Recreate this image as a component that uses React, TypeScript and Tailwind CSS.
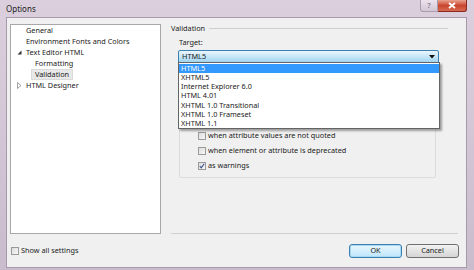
import React from 'react';

const treeItems = [
  { label: 'General', indent: 0, arrow: null },
  { label: 'Environment Fonts and Colors', indent: 0, arrow: null },
  { label: 'Text Editor HTML', indent: 0, arrow: 'open' },
  { label: 'Formatting', indent: 1, arrow: null },
  { label: 'Validation', indent: 1, arrow: null, selected: true },
  { label: 'HTML Designer', indent: 0, arrow: 'closed' },
];

const targets = [
  'HTML5',
  'XHTML5',
  'Internet Explorer 6.0',
  'HTML 4.01',
  'XHTML 1.0 Transitional',
  'XHTML 1.0 Frameset',
  'XHTML 1.1',
];

function CheckBox({ checked }: { checked?: boolean }) {
  return (
    <div className="w-[8px] h-[8px] border border-[#9a9a9a] bg-gradient-to-br from-[#dcdcdc] to-[#f8f8f8] flex items-center justify-center shrink-0">
      {checked && (
        <svg width="6" height="6" viewBox="0 0 6 6">
          <path d="M0.8 3.2 L2.3 4.8 L5.2 0.8" stroke="#3a4f8a" strokeWidth="1.1" fill="none" />
        </svg>
      )}
    </div>
  );
}

export default function App() {
  return (
    <div
      className="w-[474px] h-[270px] overflow-hidden flex flex-col bg-gradient-to-b from-[#dccfdd] to-[#c9bccd] text-[7.3px] leading-none text-[#1a1a1a]"
      style={{ fontFamily: '"Noto Sans", "Open Sans", sans-serif' }}
    >
      {/* title bar */}
      <div className="h-[17px] flex items-start justify-between shrink-0">
        <span className="ml-[6px] mt-[5px] text-[8px] text-[#222]">Options</span>
        <div className="flex mr-[7px]">
          <div className="w-[18px] h-[12px] rounded-bl-[3px] border border-[#a89cae] border-t-0 bg-gradient-to-b from-[#ece3ed] to-[#d3c6d6] flex items-center justify-center text-[7px] text-[#6a6070]">
            ?
          </div>
          <div className="w-[29px] h-[12px] rounded-br-[3px] border border-[#8a2a20] border-t-0 border-l-0 bg-gradient-to-b from-[#e8a190] via-[#c9452f] to-[#d66a4e] flex items-center justify-center">
            <svg width="8" height="7" viewBox="0 0 8 7">
              <path d="M1 1 L7 6 M7 1 L1 6" stroke="#fff" strokeWidth="1.8" />
            </svg>
          </div>
        </div>
      </div>

      {/* client area */}
      <div className="flex-1 ml-[6px] mr-[7px] mb-[2px] bg-[#f0f0f0] border border-[#a999ad] flex flex-col">
        <div className="flex h-[216px]">
          {/* tree */}
          <div className="ml-[3px] mt-[6px] w-[151px] h-[210px] bg-white border border-[#a8a8a8]">
            {treeItems.map((item) => (
              <div key={item.label} className="h-[11px] flex items-center relative" style={{ paddingLeft: item.indent ? 24 : 15 }}>
                {item.arrow === 'open' && (
                  <svg className="absolute left-[6px] top-[3px]" width="5" height="5" viewBox="0 0 5 5">
                    <path d="M4.5 0.5 L4.5 4.5 L0.5 4.5 Z" fill="#333" />
                  </svg>
                )}
                {item.arrow === 'closed' && (
                  <svg className="absolute left-[6px] top-[2px]" width="5" height="7" viewBox="0 0 5 7">
                    <path d="M0.5 0.5 L4 3.5 L0.5 6.5 Z" fill="none" stroke="#8a8a8a" strokeWidth="0.8" />
                  </svg>
                )}
                <span className={item.selected ? 'bg-[#e8e8e8] border border-[#dadada] px-[3px] h-[11px] flex items-center -ml-[4px]' : ''}>
                  {item.label}
                </span>
              </div>
            ))}
          </div>

          {/* right page */}
          <div className="ml-[10px] w-[287px] flex flex-col relative">
            <div className="flex items-center mt-[6px] h-[9px]">
              <span>Validation</span>
              <div className="ml-[4px] w-[239px] h-px bg-[#cfcfcf]" />
            </div>
            <div className="ml-[8px] mt-[6px] h-[9px]">Target:</div>
            <div className="ml-[7px] mt-[2px] w-[261px] h-[14px] border border-[#3c7fb1] rounded-[2px] bg-gradient-to-b from-[#eaf6fd] via-[#c4e5f6] to-[#98d1ef] flex items-center justify-between px-[3px]">
              <span>HTML5</span>
              <svg width="6" height="4" viewBox="0 0 6 4">
                <path d="M0 0 L6 0 L3 3.5 Z" fill="#111" />
              </svg>
            </div>

            {/* inner group with checkboxes */}
            <div className="ml-[8px] mt-[30px] w-[257px] h-[84px] border border-[#dcdcdc] rounded-[2px] flex flex-col justify-end pb-[7px] gap-[7px] pl-[18px]">
              <div className="flex items-center gap-[2px] h-[8px]">
                <CheckBox />
                <span>when attribute values are not quoted</span>
              </div>
              <div className="flex items-center gap-[2px] h-[8px]">
                <CheckBox />
                <span>when element or attribute is deprecated</span>
              </div>
              <div className="flex items-center gap-[2px] h-[8px]">
                <CheckBox checked />
                <span>as warnings</span>
              </div>
            </div>

            <div className="mt-auto h-px bg-[#d0d0d0] w-[287px]" />

            {/* dropdown list */}
            <div className="absolute left-[7px] top-[44px] w-[262px] h-[67px] bg-white border border-[#646464] shadow-[2px_2px_2px_rgba(0,0,0,0.35)] flex flex-col pt-[1px]">
              {targets.map((t, i) => (
                <div
                  key={t}
                  className={
                    i === 0
                      ? 'h-[9.5px] bg-[#3399ff] text-white flex items-center px-[2px]'
                      : 'h-[9.3px] flex items-center px-[2px]'
                  }
                >
                  {t}
                </div>
              ))}
            </div>
          </div>
        </div>

        {/* bottom bar */}
        <div className="flex-1 flex items-center justify-between pl-[4px] pr-[7px]">
          <div className="flex items-center gap-[2px] mt-[1px]">
            <CheckBox />
            <span>Show all settings</span>
          </div>
          <div className="flex gap-[4px] mt-[1px]">
            <button className="w-[53px] h-[14px] rounded-[3px] border border-[#3c7fb1] bg-gradient-to-b from-[#eaf6fd] to-[#bee6fd] text-[7.3px] leading-none shadow-[inset_0_0_0_1px_#a7d9f5]">
              OK
            </button>
            <button className="w-[53px] h-[14px] rounded-[3px] border border-[#707070] bg-gradient-to-b from-[#f2f2f2] to-[#d5d5d5] text-[7.3px] leading-none">
              Cancel
            </button>
          </div>
        </div>
      </div>
    </div>
  );
}
